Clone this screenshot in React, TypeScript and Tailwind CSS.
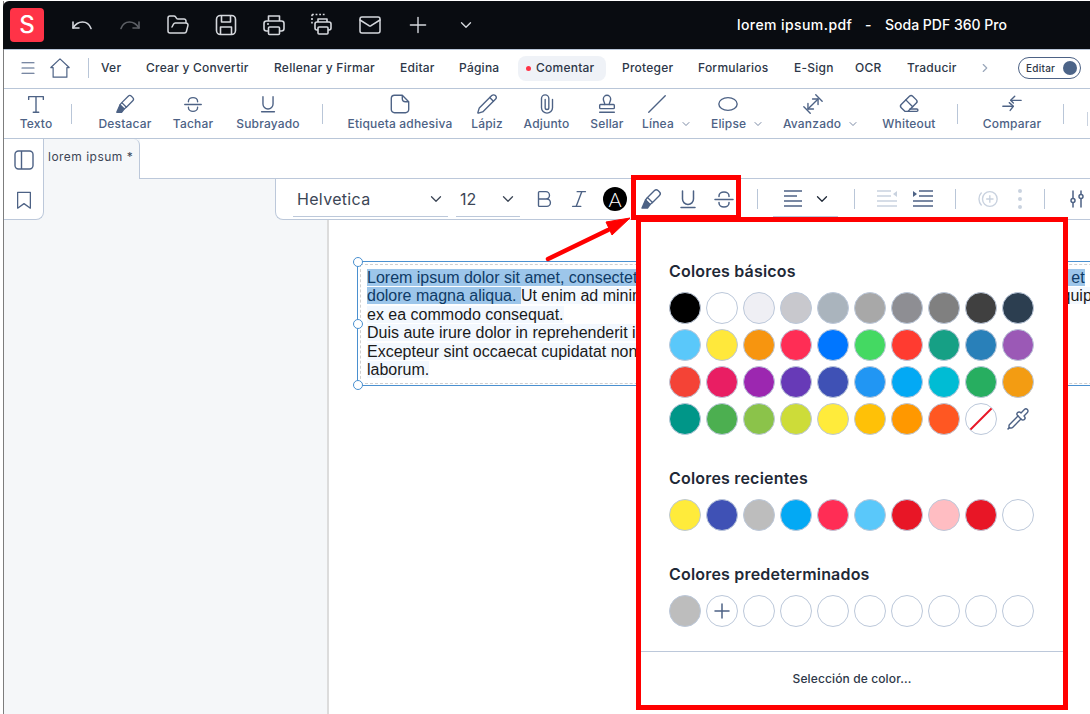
import React from "react";
import { Bold, ChevronDown, ChevronRight, FolderOpen, Italic, Mail, Menu, Pencil, Pipette, Plus } from "lucide-react";

const FONT = "font-['Inter','Noto_Sans',sans-serif]";

type IconProps = { className?: string; strokeWidth?: number };

const HighlighterIcon = ({ className = "" }: IconProps) => (
  <svg viewBox="0 0 24 24" className={className} fill="none" stroke="currentColor" strokeWidth={1.4} strokeLinejoin="round">
    <path d="M8.500 10.500 15.500 3.500a2.500 2.500 0 0 1 3.500 0l1.500 1.500a2.500 2.500 0 0 1 0 3.500L13.500 15.500z" />
    <path d="M8.500 10.500 6.500 13l4.500 4.500 2.500-2" />
    <path d="M6.500 13 3 21h5.500l2.500-3.500z" fill="currentColor" />
  </svg>
);

const StrikeIcon = ({ className = "" }: IconProps) => (
  <svg viewBox="0 0 24 24" className={className} fill="none" stroke="currentColor" strokeWidth={1.5} strokeLinecap="round">
    <path d="M7 9.500V9a5 4 0 0 1 10 0v.5" />
    <path d="M3 12.500h18" />
    <path d="M7 15.500v.5a5 4 0 0 0 10 0v-.5" />
  </svg>
);

const UnderlineIcon = ({ className = "" }: IconProps) => (
  <svg viewBox="0 0 24 24" className={className} fill="none" stroke="currentColor" strokeWidth={1.5} strokeLinecap="round">
    <path d="M6.500 4v8a5.500 5.500 0 0 0 11 0V4" />
    <path d="M5 20.500h14" />
  </svg>
);

const TextIcon = ({ className = "" }: IconProps) => (
  <svg viewBox="0 0 24 24" className={className} fill="none" stroke="currentColor" strokeWidth={1.5} strokeLinecap="round" strokeLinejoin="round">
    <path d="M4 7V4h16v3" />
    <path d="M12 4v17" />
    <path d="M9 21h6" />
  </svg>
);

const NoteIcon = ({ className = "" }: IconProps) => (
  <svg viewBox="0 0 24 24" className={className} fill="none" stroke="currentColor" strokeWidth={1.5} strokeLinejoin="round">
    <path d="M6 2.500h8.500l7 7V18a3.500 3.500 0 0 1-3.500 3.500H6A3.500 3.500 0 0 1 2.500 18V6A3.500 3.500 0 0 1 6 2.500z" />
    <path d="M14.500 2.500V6a3.500 3.500 0 0 0 3.500 3.500h3.500" />
  </svg>
);

const ClipIcon = ({ className = "" }: IconProps) => (
  <svg viewBox="0 0 24 24" className={className} fill="none" stroke="currentColor" strokeWidth={1.5} strokeLinecap="round">
    <path d="M10 7v9a2 2 0 0 0 4 0V6a4 4 0 0 0-8 0v10a6 6 0 0 0 12 0V7" />
  </svg>
);

const StampIcon = ({ className = "" }: IconProps) => (
  <svg viewBox="0 0 24 24" className={className} fill="none" stroke="currentColor" strokeWidth={1.5} strokeLinecap="round" strokeLinejoin="round">
    <path d="M9.500 12.500c0-2.500-1.500-3.500-1.500-6a4 4 0 0 1 8 0c0 2.500-1.500 3.500-1.500 6" />
    <rect x="4" y="12.500" width="16" height="4.500" rx="1" />
    <path d="M4 21h16" />
  </svg>
);

const LineIcon = ({ className = "" }: IconProps) => (
  <svg viewBox="0 0 24 24" className={className} fill="none" stroke="currentColor" strokeWidth={1.5} strokeLinecap="round">
    <path d="M3 21 21 3" />
  </svg>
);

const EllipseIcon = ({ className = "" }: IconProps) => (
  <svg viewBox="0 0 24 24" className={className} fill="none" stroke="currentColor" strokeWidth={1.5}>
    <ellipse cx="12" cy="12" rx="10" ry="7" />
  </svg>
);

const AdvancedIcon = ({ className = "" }: IconProps) => (
  <svg viewBox="0 0 24 24" className={className} fill="none" stroke="currentColor" strokeWidth={1.5} strokeLinecap="round" strokeLinejoin="round">
    <path d="M6.500 17.500l11-11" />
    <path d="M11.500 6.500h6v6" />
    <path d="M6.500 11.500v6h6" />
    <path d="M15 2l7 7" />
    <path d="M2 15l7 7" />
  </svg>
);

const EraserIcon = ({ className = "" }: IconProps) => (
  <svg viewBox="0 0 24 24" className={className} fill="none" stroke="currentColor" strokeWidth={1.5} strokeLinejoin="round" strokeLinecap="round">
    <path d="M12.500 3.500a2.500 2.500 0 0 1 3.500 0l4 4a2.500 2.500 0 0 1 0 3.500L11 20H7.500l-4-4a2.500 2.500 0 0 1 0-3.500z" />
    <path d="M8.500 7.500 16 15" />
    <path d="M13 17.500h7.500a1.250 1.250 0 0 1 0 2.500H11" />
  </svg>
);

const CompareIcon = ({ className = "" }: IconProps) => (
  <svg viewBox="0 0 24 24" className={className} fill="none" stroke="currentColor" strokeWidth={1.5} strokeLinecap="round" strokeLinejoin="round">
    <path d="M22 8H11" />
    <path d="M15 3.500 10.500 8l3 3" />
    <path d="M2 14.500h11" />
    <path d="M9 10.500l4.500 4-3.500 4.500" />
  </svg>
);

const HomeIcon = ({ className = "" }: IconProps) => (
  <svg viewBox="0 0 24 24" className={className} fill="none" stroke="currentColor" strokeWidth={1.3} strokeLinejoin="round">
    <path d="M12 2 2 11.500h2.500V22h15V11.500H22z" />
  </svg>
);

const UndoIcon = ({ className = "" }: IconProps) => (
  <svg viewBox="0 0 24 24" className={className} fill="none" stroke="currentColor" strokeWidth={1.6} strokeLinecap="round" strokeLinejoin="round">
    <path d="M3 9v6h6" />
    <path d="M3 15c2.500-4 5.500-6 9.500-6s7 2.500 8.500 6.500" />
  </svg>
);

const RedoIcon = ({ className = "" }: IconProps) => (
  <svg viewBox="0 0 24 24" className={className} fill="none" stroke="currentColor" strokeWidth={1.6} strokeLinecap="round" strokeLinejoin="round">
    <path d="M21 9v6h-6" />
    <path d="M21 15c-2.500-4-5.500-6-9.500-6s-7 2.500-8.500 6.500" />
  </svg>
);

const SaveIcon = ({ className = "" }: IconProps) => (
  <svg viewBox="0 0 24 24" className={className} fill="none" stroke="currentColor" strokeWidth={1.6} strokeLinejoin="round">
    <rect x="2.500" y="2.500" width="19" height="19" rx="4" />
    <path d="M7.500 2.500V9h9V2.500" />
    <path d="M6.500 21.500V14h11v7.500" />
  </svg>
);

const PrintIcon = ({ className = "" }: IconProps) => (
  <svg viewBox="0 0 24 24" className={className} fill="none" stroke="currentColor" strokeWidth={1.6} strokeLinejoin="round">
    <path d="M6.500 8V3h11v5" />
    <rect x="2" y="8" width="20" height="10" rx="2.500" />
    <rect x="6.500" y="14" width="11" height="7.500" rx="1" fill="#090c11" />
    <path d="M5 11h2" />
  </svg>
);

const DottedPrintIcon = ({ className = "" }: IconProps) => (
  <svg viewBox="0 0 24 24" className={className} fill="none" stroke="currentColor" strokeWidth={1.6} strokeLinejoin="round">
    <path d="M2 1.500h13" strokeDasharray="1.800 1.800" />
    <path d="M2 1.500v9" strokeDasharray="1.800 1.800" />
    <path d="M8 9V6h9v3" />
    <rect x="5" y="9" width="16" height="8" rx="2" />
    <rect x="8" y="14" width="10" height="7" rx="1" fill="#090c11" />
  </svg>
);

const tools = [
  { label: "Destacar", icon: HighlighterIcon, cls: "w-[68px]" },
  { label: "Tachar", icon: StrikeIcon, cls: "w-[68px]" },
  { label: "Subrayado", icon: UnderlineIcon, cls: "w-[82px]" },
];

const tools2 = [
  { label: "Etiqueta adhesiva", icon: NoteIcon, cls: "w-[130px]" },
  { label: "Lápiz", icon: Pencil, cls: "w-[44px]" },
  { label: "Adjunto", icon: ClipIcon, cls: "w-[75px]" },
  { label: "Sellar", icon: StampIcon, cls: "w-[46px]" },
];

const basicColors = [
  "bg-[#000000]", "bg-[#ffffff]", "bg-[#efeff4]", "bg-[#c8c8cd]", "bg-[#aab4bd]", "bg-[#a8a8a8]", "bg-[#8e8e93]", "bg-[#808080]", "bg-[#404040]", "bg-[#2c3e50]",
  "bg-[#5ac8fa]", "bg-[#ffe83b]", "bg-[#f7950f]", "bg-[#ff2d55]", "bg-[#0076ff]", "bg-[#44d962]", "bg-[#ff3b30]", "bg-[#16a085]", "bg-[#2980b9]", "bg-[#9b59b6]",
  "bg-[#f44336]", "bg-[#e91e63]", "bg-[#9c27b0]", "bg-[#673ab7]", "bg-[#3f51b5]", "bg-[#2196f3]", "bg-[#03a9f4]", "bg-[#00bcd4]", "bg-[#27ae60]", "bg-[#f39c12]",
  "bg-[#009688]", "bg-[#4caf50]", "bg-[#8bc34a]", "bg-[#cddc39]", "bg-[#ffeb3b]", "bg-[#ffc107]", "bg-[#ff9800]", "bg-[#ff5722]",
];

const recentColors = [
  "bg-[#ffeb3b]", "bg-[#3f51b5]", "bg-[#bdbdbd]", "bg-[#03a9f4]", "bg-[#ff2d55]", "bg-[#5ac8fa]", "bg-[#e81626]", "bg-[#ffbdc2]", "bg-[#e81626]", "bg-[#ffffff]",
];

const Swatch = ({ color, children }: { color?: string; children?: React.ReactNode }) => (
  <div className={`flex h-[32px] w-[32px] items-center justify-center overflow-hidden rounded-full border border-[#bcc8da] ${color ?? "bg-white"}`}>
    {children}
  </div>
);

const Sep = ({ className = "" }: { className?: string }) => <div className={`h-[20px] w-px shrink-0 bg-[#b9c6d8] ${className}`} />;

const Heading = ({ children, className = "" }: { children: React.ReactNode; className?: string }) => (
  <h3 className={`whitespace-nowrap text-[16px] font-semibold leading-[20px] tracking-[0.012em] text-[#1f2937] ${className}`}>{children}</h3>
);

const ToolButton = ({
  label,
  icon: Icon,
  className,
}: {
  label: string;
  icon: React.ComponentType<IconProps>;
  className?: string;
}) => (
  <div className={`flex shrink-0 flex-col items-center pb-[3px] ${className ?? ""}`}>
    <Icon className="h-[22px] w-[22px]" strokeWidth={1.5} />
    <span className="mt-[2px] whitespace-nowrap text-[12px] font-medium leading-[14px] tracking-[0.015em]">{label}</span>
  </div>
);

const DropTool = ({
  label,
  icon: Icon,
  iconClass,
  className,
}: {
  label: string;
  icon: React.ComponentType<IconProps>;
  iconClass: string;
  className?: string;
}) => (
  <div className={`flex shrink-0 flex-col items-start pb-[3px] ${className ?? ""}`}>
    <Icon className={`h-[22px] w-[22px] ${iconClass}`} />
    <div className="mt-[2px] flex items-center gap-[6px]">
      <span className="whitespace-nowrap text-[12px] font-medium leading-[14px] tracking-[0.015em]">{label}</span>
      <ChevronDown className="h-[12px] w-[12px]" strokeWidth={1.5} />
    </div>
  </div>
);

const TextLine = ({ children }: { children: React.ReactNode }) => (
  <div className="whitespace-nowrap">
    <span className="bg-[#f3f8fe]">{children}</span>
  </div>
);

const Marked = ({ children }: { children: React.ReactNode }) => (
  <span className="bg-[#9dc6ea] text-[#0f3b66]">{children}</span>
);

export default function App() {
  return (
    <div className={`relative h-[714px] w-[1090px] overflow-hidden bg-white pl-[3px] pt-px ${FONT}`}>
      <div className="flex h-full flex-col border-l border-[#7d7d7d]">
        {/* title bar */}
        <header className="-ml-px flex h-[48px] shrink-0 items-center rounded-tl-md bg-[#090c11] pl-[7px] text-[#d5d8dd]">
          <div className="flex h-[34px] w-[34px] items-center justify-center rounded-[4px] bg-[#ff3347] text-[24px] font-medium text-white">S</div>
          <div className="ml-[14px] flex items-center">
            <div className="flex w-[48px] justify-center"><UndoIcon className="h-[24px] w-[24px]" /></div>
            <div className="flex w-[48px] justify-center"><RedoIcon className="h-[24px] w-[24px] text-[#5d6066]" /></div>
            <div className="flex w-[48px] justify-center"><FolderOpen className="h-[24px] w-[24px]" strokeWidth={1.5} /></div>
            <div className="flex w-[48px] justify-center"><SaveIcon className="h-[24px] w-[24px]" /></div>
            <div className="flex w-[48px] justify-center"><PrintIcon className="h-[24px] w-[24px]" /></div>
            <div className="flex w-[48px] justify-center"><DottedPrintIcon className="h-[24px] w-[24px]" /></div>
            <div className="flex w-[48px] justify-center"><Mail className="h-[24px] w-[24px]" strokeWidth={1.5} /></div>
            <div className="flex w-[48px] justify-center"><Plus className="h-[26px] w-[26px]" strokeWidth={1.3} /></div>
            <div className="flex w-[48px] justify-center"><ChevronDown className="h-[18px] w-[18px]" strokeWidth={1.8} /></div>
          </div>
          <div className="-mt-[1px] ml-[247px] flex items-center whitespace-nowrap text-[14px] font-medium text-white">
            <span className="w-[128px] tracking-[0.03em]">lorem ipsum.pdf</span>
            <span className="w-[20px]">-</span>
            <span>Soda PDF 360 Pro</span>
          </div>
        </header>

        {/* menu bar */}
        <nav className="flex h-[40px] shrink-0 items-center border-b border-t border-[#b9c6d8] pb-[2px] pl-[15px] text-[12px] font-medium tracking-[0.02em] text-[#2d3748]">
          <Menu className="h-[18px] w-[18px] text-[#4d6285]" strokeWidth={1.5} />
          <HomeIcon className="ml-[12px] h-[22px] w-[22px] text-[#4d6285]" />
          <Sep className="ml-[17px]" />
          <span className="ml-[12px] w-[45px]">Ver</span>
          <span className="w-[128px] whitespace-nowrap">Crear y Convertir</span>
          <span className="w-[126px] whitespace-nowrap">Rellenar y Firmar</span>
          <span className="w-[59px]">Editar</span>
          <span className="w-[59px]">Página</span>
          <span className="flex h-[25px] w-[88px] items-center rounded-lg bg-[#eff2f7] pl-[8px]">
            <span className="h-[5px] w-[5px] rounded-full bg-[#ff3347]" />
            <span className="ml-[5px]">Comentar</span>
          </span>
          <span className="ml-[16px] w-[76px]">Proteger</span>
          <span className="w-[96px]">Formularios</span>
          <span className="w-[61px]">E-Sign</span>
          <span className="w-[52px]">OCR</span>
          <span className="w-[71px]">Traducir</span>
          <ChevronRight className="h-[14px] w-[14px] text-[#9aa7ba]" strokeWidth={2} />
          <div className="ml-[26px] flex h-[22px] w-[63px] items-center justify-between rounded-full border border-[#4d6285] pl-[7px] pr-[3px] text-[10px] text-[#2d3748]">
            Editar
            <span className="h-[14px] w-[14px] rounded-full bg-[#4c6488]" />
          </div>
        </nav>

        {/* comment tools */}
        <div className="flex h-[50px] shrink-0 items-center overflow-hidden border-b border-[#b9c6d8] text-[#4d6285]">
          <ToolButton label="Texto" icon={TextIcon} className="ml-[15px] w-[34px]" />
          <Sep className="ml-[18px]" />
          <div className="ml-[19px] flex">
            {tools.map((t) => (
              <ToolButton key={t.label} label={t.label} icon={t.icon} className={t.cls} />
            ))}
          </div>
          <Sep className="ml-[13px]" />
          <div className="ml-[12px] flex">
            {tools2.map((t) => (
              <ToolButton key={t.label} label={t.label} icon={t.icon} className={t.cls} />
            ))}
          </div>
          <DropTool label="Línea" icon={LineIcon} iconClass="ml-[4px]" className="ml-[12px] w-[69px]" />
          <DropTool label="Elipse" icon={EllipseIcon} iconClass="ml-[6px]" className="w-[72px]" />
          <DropTool label="Avanzado" icon={AdvancedIcon} iconClass="ml-[19px]" className="w-[95px]" />
          <ToolButton label="Whiteout" icon={EraserIcon} className="w-[62px]" />
          <Sep className="ml-[17px]" />
          <ToolButton label="Comparar" icon={CompareIcon} className="ml-[22px] w-[64px]" />
          <Sep className="ml-[19px]" />
          <div className="ml-[23px] mb-[12px] h-[14px] w-px shrink-0 self-end bg-[#c9d2df]" />
        </div>

        {/* work area */}
        <div className="flex min-h-0 flex-1 bg-[#f5f7f9]">
          <aside className="flex h-[81px] w-[40px] shrink-0 flex-col items-center gap-[19px] rounded-br-lg border-b border-r border-[#bcc8da] bg-white pt-[10px] text-[#4d6285]">
            <svg viewBox="0 0 22 22" className="h-[22px] w-[22px]" fill="none" stroke="currentColor" strokeWidth={1.4}>
              <rect x="2" y="2" width="18" height="18" rx="3.500" />
              <path d="M8.500 2v18" />
            </svg>
            <svg viewBox="0 0 22 22" className="h-[20px] w-[20px]" fill="none" stroke="currentColor" strokeWidth={1.4} strokeLinejoin="round">
              <path d="M4 2.500h14V20l-7-5-7 5z" />
            </svg>
          </aside>

          <div className="flex min-w-0 flex-1 flex-col">
            <div className="flex h-[40px] shrink-0">
              <div className="w-[96px] whitespace-nowrap rounded-tr-md border-r border-[#bcc8da] pl-[4px] pt-[11px] text-[12px] leading-[14px] tracking-[0.04em] text-[#3c4656]">
                lorem ipsum *
              </div>
              <div className="flex-1 border-b border-[#bcc8da] bg-white" />
            </div>

            <div className="flex h-[41px] shrink-0 pl-[231px]">
              <div className="flex flex-1 items-center rounded-bl-lg border-b border-l border-[#bcc8da] bg-white text-[#4d6285]">
                <div className="ml-[17px] flex h-[35px] w-[155px] items-center justify-between border-b border-[#bcc8da] pl-[4px] pr-[3px] text-[16px] tracking-[0.02em] text-[#3c4656]">
                  Helvetica
                  <ChevronDown className="h-[18px] w-[18px]" strokeWidth={1.7} />
                </div>
                <div className="ml-[8px] flex h-[35px] w-[64px] items-center justify-between border-b border-[#bcc8da] pl-[4px] pr-[3px] text-[16px] text-[#3c4656]">
                  12
                  <ChevronDown className="h-[18px] w-[18px]" strokeWidth={1.7} />
                </div>
                <Bold className="ml-[13px] h-[22px] w-[22px]" strokeWidth={1.5} />
                <Italic className="ml-[13px] h-[22px] w-[22px]" strokeWidth={1.5} />
                <div className="ml-[13px] flex h-[24px] w-[24px] items-center justify-center rounded-full bg-black font-['Lato',sans-serif] text-[20px] font-light text-white">A</div>
                <HighlighterIcon className="ml-[12px] h-[24px] w-[24px]" />
                <UnderlineIcon className="ml-[13px] h-[24px] w-[24px]" />
                <StrikeIcon className="ml-[12px] h-[24px] w-[24px]" />
                <Sep className="ml-[21px]" />
                <div className="ml-[15px] flex h-[35px] w-[65px] items-center border-b border-[#bcc8da] pl-[10px]">
                  <svg viewBox="0 0 20 20" className="h-[20px] w-[20px]" fill="none" stroke="currentColor" strokeWidth={1.4}>
                    <path d="M1 2h18M1 7h13M1 12h18M1 17h18" />
                  </svg>
                  <ChevronDown className="ml-[10px] h-[18px] w-[18px] text-[#1f2937]" strokeWidth={1.7} />
                </div>
                <Sep className="ml-[16px]" />
                <svg viewBox="0 0 22 20" className="ml-[21px] h-[20px] w-[22px] text-[#c9d2df]" fill="none" stroke="currentColor" strokeWidth={1.4}>
                  <path d="M1 2h14M1 7h14M1 12h20M1 17h20" />
                  <path d="M21 2v6l-4-3z" fill="currentColor" stroke="none" />
                </svg>
                <svg viewBox="0 0 22 20" className="ml-[14px] h-[20px] w-[22px]" fill="none" stroke="currentColor" strokeWidth={1.4}>
                  <path d="M7 2h14M7 7h14M1 12h20M1 17h20" />
                  <path d="M1 2v6l4-3z" fill="currentColor" stroke="none" />
                </svg>
                <Sep className="ml-[21px]" />
                <svg viewBox="0 0 24 24" className="ml-[21px] h-[22px] w-[22px] text-[#c9d2df]" fill="none" stroke="currentColor" strokeWidth={1.5}>
                  <circle cx="14" cy="12" r="8" />
                  <path d="M5 5a10 10 0 0 0 0 14M14 8v8M10 12h8" />
                </svg>
                <div className="ml-[19px] flex flex-col gap-[4px]">
                  <span className="h-[4px] w-[4px] rounded-full bg-[#c9d2df]" />
                  <span className="h-[4px] w-[4px] rounded-full bg-[#c9d2df]" />
                  <span className="h-[4px] w-[4px] rounded-full bg-[#c9d2df]" />
                </div>
                <Sep className="ml-[22px]" />
                <svg viewBox="0 0 20 20" className="ml-[22px] h-[20px] w-[20px]" fill="none" stroke="currentColor" strokeWidth={1.5} strokeLinecap="round">
                  <path d="M6 2v7M6 14v4M14 2v3M14 10v8" />
                  <circle cx="6" cy="11.500" r="2" />
                  <circle cx="14" cy="7.500" r="2" />
                </svg>
              </div>
            </div>

            <div className="flex min-h-0 flex-1 overflow-hidden">
              <div className="w-[285px] shrink-0 border-r-2 border-[#dcdcdc]" />
              <main className="min-w-0 flex-1 overflow-hidden bg-white pl-[28px] pt-[41px]">
                <div className="relative w-[900px] border-b border-l border-t border-[#4a90d0] pb-[1px] pl-[2px] pt-[2px]">
                  <span className="absolute -left-[5px] -top-[5px] h-[10px] w-[10px] rounded-full border-[1.500px] border-[#4a90d0] bg-white" />
                  <span className="absolute -left-[5px] top-[57px] h-[10px] w-[10px] rounded-full border-[1.500px] border-[#4a90d0] bg-white" />
                  <span className="absolute -bottom-[5px] -left-[5px] h-[10px] w-[10px] rounded-full border-[1.500px] border-[#4a90d0] bg-white" />
                  <div className="border-b border-l border-t border-dashed border-[#d0d0d0] pb-[4px] pl-[6px] pt-[4px] font-['Liberation_Sans',sans-serif] text-[16px] leading-[18.400px] text-[#1a1a1a]">
                    <div className="whitespace-nowrap">
                      <Marked>Lorem ipsum dolor sit amet, consectetur adipiscing elit, sed do eiusmod tempor incididunt ut labore et</Marked>
                    </div>
                    <div className="whitespace-nowrap">
                      <Marked>dolore magna aliqua. </Marked>
                      <span className="bg-[#f3f8fe]">Ut enim ad minim veniam, quis nostrud exercitation ullamco laboris nisi ut aliquip</span>
                    </div>
                    <TextLine>ex ea commodo consequat.</TextLine>
                    <TextLine>Duis aute irure dolor in reprehenderit in voluptate velit esse cillum dolore eu fugiat nulla pariatur.</TextLine>
                    <TextLine>Excepteur sint occaecat cupidatat non proident, sunt in culpa qui officia deserunt mollit anim id est</TextLine>
                    <TextLine>laborum.</TextLine>
                  </div>
                </div>
              </main>
            </div>
          </div>
        </div>
      </div>

      {/* red annotations drawn over the app */}
      <div className="absolute left-[631px] top-[175px] h-[45px] w-[110px] border-[5px] border-[#ff0000]" />
      <svg viewBox="0 0 100 60" className="absolute left-[540px] top-[210px] h-[60px] w-[100px]" fill="#ff0000" stroke="#ff0000">
        <path d="M8 49 68 20" strokeWidth={4.500} strokeLinecap="round" fill="none" />
        <path d="M90 8 66 12 72 25z" strokeLinejoin="round" strokeWidth={1} />
      </svg>

      {/* colour popup */}
      <section className="absolute left-[636px] top-[217px] flex h-[493px] w-[432px] flex-col border-[5px] border-[#ff0000] bg-white">
        <div className="flex-1 pl-[28px] pt-[39px]">
          <Heading>Colores básicos</Heading>
          <div className="mt-[11px] grid w-[365px] grid-cols-10 gap-[5px]">
            {basicColors.map((c, i) => (
              <Swatch key={i} color={c} />
            ))}
            <Swatch>
              <svg viewBox="0 0 32 32" className="h-full w-full">
                <path d="M4 28 28 4" stroke="#e81626" strokeWidth={2} />
              </svg>
            </Swatch>
            <div className="flex h-[32px] w-[32px] items-center justify-center">
              <Pipette className="h-[24px] w-[24px] text-[#4d6285]" strokeWidth={1.4} />
            </div>
          </div>

          <Heading className="mt-[33px]">Colores recientes</Heading>
          <div className="mt-[11px] grid w-[365px] grid-cols-10 gap-[5px]">
            {recentColors.map((c, i) => (
              <Swatch key={i} color={c} />
            ))}
          </div>

          <Heading className="mt-[33px]">Colores predeterminados</Heading>
          <div className="mt-[11px] grid w-[365px] grid-cols-10 gap-[5px]">
            <Swatch color="bg-[#bdbdbd]" />
            <Swatch>
              <Plus className="h-[24px] w-[24px] text-[#4d6285]" strokeWidth={1.5} />
            </Swatch>
            {Array.from({ length: 8 }).map((_, i) => (
              <Swatch key={i} />
            ))}
          </div>
        </div>
        <div className="flex h-[54px] items-center justify-center border-t border-[#bcc8da] text-[12px] font-medium tracking-[0.01em] text-[#2d3748]">
          Selección de color...
        </div>
      </section>
    </div>
  );
}
